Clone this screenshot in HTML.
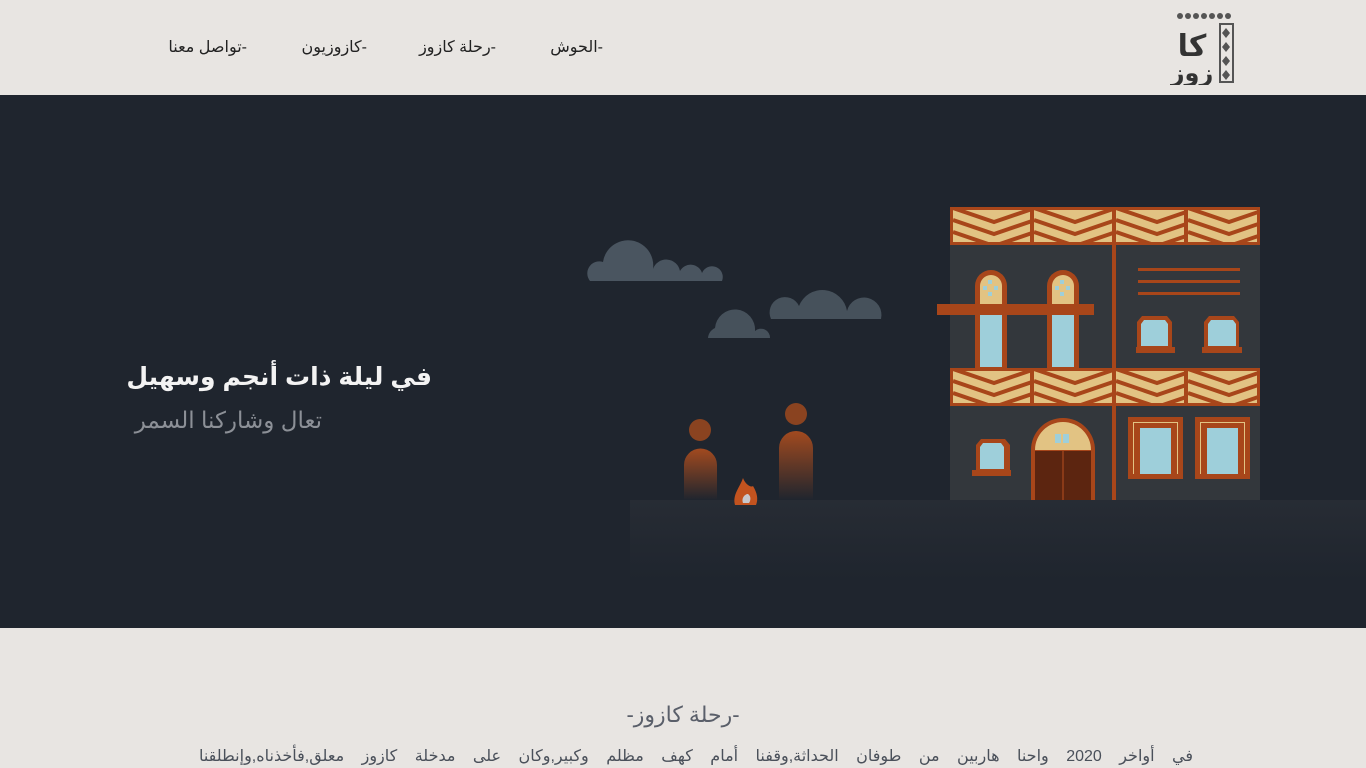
<!DOCTYPE html>
<html><head><meta charset="utf-8"><style>
*{margin:0;padding:0;box-sizing:border-box}
body{width:1366px;height:768px;overflow:hidden;background:#e8e5e2;font-family:"Liberation Sans","Noto Sans CJK SC","DejaVu Sans",sans-serif;position:relative}
.nav a{position:absolute;top:37px;font-size:16px;color:#222;text-decoration:none;white-space:nowrap;direction:rtl}
.hero{position:absolute;top:95px;left:0;width:1366px;height:533px;background:#1f252e}
.t1{position:absolute;right:934px;top:362px;color:#f3f3f3;font-size:25px;font-weight:bold;white-space:nowrap;direction:rtl}
.t2{position:absolute;right:1044px;top:407px;color:#8c9097;font-size:23px;white-space:nowrap;direction:rtl}
.h2{position:absolute;top:702px;left:0;width:1366px;text-align:center;font-size:22px;color:#5a5f6a;direction:rtl}
.p{position:absolute;top:746px;right:173px;font-size:16px;color:#4a505a;white-space:nowrap;direction:rtl;word-spacing:13px}
</style></head><body>
<div class="nav">
<a style="right:1119px">-تواصل معنا</a>
<a style="right:999px">-كازوزيون</a>
<a style="right:870px">-رحلة كازوز</a>
<a style="right:763px">-الحوش</a>
</div>
<svg style="position:absolute;left:1170px;top:10px" width="66" height="75" viewBox="0 0 66 75">
<g fill="#555">
<circle cx="10" cy="6" r="3"/><circle cx="18" cy="6" r="3"/><circle cx="26" cy="6" r="3"/><circle cx="34" cy="6" r="3"/><circle cx="42" cy="6" r="3"/><circle cx="50" cy="6" r="3"/><circle cx="58" cy="6" r="3"/>
<rect x="50" y="14" width="13" height="58" fill="none" stroke="#555" stroke-width="2"/>
<path d="M56 18l4 5-4 5-4-5zM56 32l4 5-4 5-4-5zM56 46l4 5-4 5-4-5zM56 60l4 5-4 5-4-5z"/>
</g>
<text x="22" y="46" font-size="30" font-weight="bold" fill="#333" text-anchor="middle" font-family="Liberation Sans,DejaVu Sans,sans-serif">كا</text>
<text x="22" y="71" font-size="24" font-weight="bold" fill="#333" text-anchor="middle" font-family="Liberation Sans,DejaVu Sans,sans-serif" direction="rtl">زوز</text>
</svg>
<div class="hero"></div>
<svg style="position:absolute;left:0;top:95px" width="1366" height="533" viewBox="0 95 1366 533">
<defs>
<linearGradient id="pg" x1="0" y1="0" x2="0" y2="1"><stop offset="0" stop-color="#a24a1f"/><stop offset="1" stop-color="#a24a1f" stop-opacity="0"/></linearGradient>
<linearGradient id="gr" x1="0" y1="0" x2="0" y2="1"><stop offset="0" stop-color="#272c34"/><stop offset="1" stop-color="#1f252e"/></linearGradient>
<clipPath id="c1"><rect x="953" y="210" width="304" height="32"/></clipPath>
<clipPath id="c2"><rect x="953" y="371" width="304" height="32"/></clipPath>
<g id="chv">
<rect x="0" y="0" width="82" height="32" fill="#e2c383"/>
<path d="M0 -2L41 12L82 -2M0 10L41 24L82 10M0 22L41 36L82 22" stroke="#a8461a" stroke-width="4" fill="none"/>
</g>
</defs>
<g fill="#4a5560">
<path d="M590 281h132a10 10 0 0 0-20-8a12 12 0 0 0-22-2a14 14 0 0 0-27-2a25 25 0 0 0-50-7a12 12 0 0 0-13 19z"/>
<path d="M708 338h62a9 9 0 0 0-15-7a20 20 0 0 0-40-3a12 12 0 0 0-7 10z" fill="#46515b"/>
<path d="M771 319h110a17 17 0 0 0-34-8a25 25 0 0 0-48-5a13 13 0 0 0-28 13z" fill="#46515b"/>
</g>
<rect x="630" y="500" width="736" height="80" fill="url(#gr)"/>
<circle cx="700" cy="430" r="11" fill="#8a4320"/>
<path d="M684 500v-35a16 16 0 0 1 33 0v35z" fill="url(#pg)"/>
<circle cx="796" cy="414" r="11" fill="#8a4320"/>
<path d="M779 500v-52a17 17 0 0 1 34 0v52z" fill="url(#pg)"/>
<path d="M735 505c-3-10 5-18 8-27c2 6 8 10 10 8c3 5 6 12 3 19z" fill="#c2531f"/>
<path d="M743 503c-2-5 2-9 5-9c3 2 3 6 1 9z" fill="#c8c8cc"/>
<rect x="950" y="207" width="310" height="293" fill="#33373c"/>
<rect x="950" y="207" width="310" height="38" fill="#a8461a"/>
<rect x="950" y="368" width="310" height="38" fill="#a8461a"/>
<g clip-path="url(#c1)">
<use href="#chv" x="953" y="210"/><use href="#chv" x="1034" y="210"/><use href="#chv" x="1116" y="210"/><use href="#chv" x="1188" y="210"/>
</g>
<g clip-path="url(#c2)">
<use href="#chv" x="953" y="371"/><use href="#chv" x="1034" y="371"/><use href="#chv" x="1116" y="371"/><use href="#chv" x="1188" y="371"/>
</g>
<g fill="#a8461a">
<rect x="1030" y="207" width="4" height="38"/><rect x="1112" y="207" width="4" height="38"/><rect x="1184" y="207" width="4" height="38"/>
<rect x="1030" y="368" width="4" height="38"/><rect x="1112" y="368" width="4" height="38"/><rect x="1184" y="368" width="4" height="38"/>
<rect x="1112" y="245" width="4" height="255"/>
<rect x="1138" y="268" width="102" height="3"/><rect x="1138" y="280" width="102" height="3"/><rect x="1138" y="292" width="102" height="3"/>
<path d="M975 368v-82a16 16 0 0 1 32 0v82z"/>
<path d="M1047 368v-82a16 16 0 0 1 32 0v82z"/>
<rect x="937" y="304" width="157" height="11"/>
<path d="M1137 352v-30l5-6h25l5 6v30z"/><rect x="1136" y="347" width="39" height="6"/>
<path d="M1204 352v-30l5-6h25l5 6v30z"/><rect x="1202" y="347" width="40" height="6"/>
<path d="M976 475v-30l5-6h24l5 6v30z"/><rect x="972" y="470" width="39" height="6"/>
<path d="M1031 500v-50a32 32 0 0 1 64 0v50z"/>
<rect x="1128" y="417" width="55" height="62"/><rect x="1195" y="417" width="55" height="62"/>
</g>
<g fill="#e2c383">
<path d="M980 304v-18a11 11 0 0 1 22 0v18z"/><path d="M1052 304v-18a11 11 0 0 1 22 0v18z"/>
<path d="M1035 450a28 28 0 0 1 56 0z"/>
<rect x="1133" y="422" width="45" height="52"/><rect x="1200" y="422" width="45" height="52"/>
</g>
<g fill="#9ecfda">
<rect x="980" y="315" width="22" height="52"/><rect x="1052" y="315" width="22" height="52"/>
<path d="M1141 346v-22l3-4h21l3 4v22z"/><path d="M1208 346v-22l3-4h22l3 4v22z"/>
<path d="M980 469v-22l3-4h18l3 4v22z"/>
<rect x="1140" y="428" width="31" height="46"/><rect x="1207" y="428" width="31" height="46"/>
<rect x="988" y="280" width="4" height="4"/><rect x="994" y="286" width="4" height="4"/><rect x="988" y="292" width="4" height="4"/><rect x="983" y="286" width="4" height="4"/>
<rect x="1060" y="280" width="4" height="4"/><rect x="1066" y="286" width="4" height="4"/><rect x="1060" y="292" width="4" height="4"/><rect x="1055" y="286" width="4" height="4"/>
<rect x="1055" y="434" width="6" height="9"/><rect x="1063" y="434" width="6" height="9"/>
</g>
<g fill="#a8461a"><rect x="1134" y="423" width="43" height="5"/><rect x="1134" y="423" width="6" height="51"/><rect x="1171" y="423" width="6" height="51"/>
<rect x="1201" y="423" width="43" height="5"/><rect x="1201" y="423" width="6" height="51"/><rect x="1238" y="423" width="6" height="51"/></g>
<rect x="1035" y="451" width="56" height="49" fill="#5c2510"/>
<rect x="1062" y="451" width="2" height="49" fill="#8a3a18"/>
</svg>
<div class="t1">في ليلة ذات أنجم وسهيل</div>
<div class="t2">تعال وشاركنا السمر</div>
<div class="h2">-رحلة كازوز-</div>
<div class="p">في أواخر 2020 واحنا هاربين من طوفان الحداثة,وقفنا أمام كهف مظلم وكبير,وكان على مدخلة كازوز معلق,فأخذناه,وإنطلقنا</div>
</body></html>
